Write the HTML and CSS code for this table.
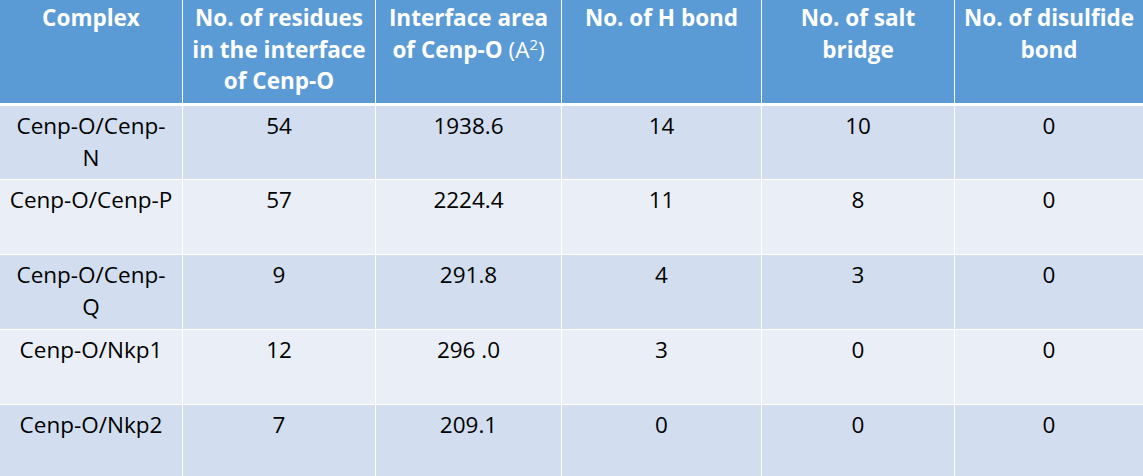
FILE: index.html
```html
<!DOCTYPE html>
<html lang="en">
<head>
<meta charset="utf-8">
<title>Cenp-O interface table</title>
<link rel="stylesheet" href="styles.css">
</head>
<body>
<div class="table">
  <div class="th">Complex</div>
  <div class="th">No. of residues<br>in the interface<br>of Cenp-O</div>
  <div class="th">Interface area<br>of Cenp-O <span class="unit">(A<sup>2</sup>)</span></div>
  <div class="th">No. of H bond</div>
  <div class="th">No. of salt<br>bridge</div>
  <div class="th">No. of disulfide<br>bond</div>

  <div class="td odd">Cenp-O/Cenp-<br>N</div>
  <div class="td odd">54</div>
  <div class="td odd">1938.6</div>
  <div class="td odd">14</div>
  <div class="td odd">10</div>
  <div class="td odd">0</div>

  <div class="td even">Cenp-O/Cenp-P</div>
  <div class="td even">57</div>
  <div class="td even">2224.4</div>
  <div class="td even">11</div>
  <div class="td even">8</div>
  <div class="td even">0</div>

  <div class="td odd">Cenp-O/Cenp-<br>Q</div>
  <div class="td odd">9</div>
  <div class="td odd">291.8</div>
  <div class="td odd">4</div>
  <div class="td odd">3</div>
  <div class="td odd">0</div>

  <div class="td even">Cenp-O/Nkp1</div>
  <div class="td even">12</div>
  <div class="td even">296 .0</div>
  <div class="td even">3</div>
  <div class="td even">0</div>
  <div class="td even">0</div>

  <div class="td odd">Cenp-O/Nkp2</div>
  <div class="td odd">7</div>
  <div class="td odd">209.1</div>
  <div class="td odd">0</div>
  <div class="td odd">0</div>
  <div class="td odd">0</div>
</div>
</body>
</html>
```
FILE: styles.css
```css
html, body {
  margin: 0;
  padding: 0;
  background: #ffffff;
}

body {
  font-family: "Open Sans", "Noto Sans", sans-serif;
  font-size: 22.5px;
  line-height: 31.7px;
  color: #000000;
}

.table {
  display: grid;
  grid-template-columns: 182px 192px 185px 199px 192px 188px;
  grid-template-rows: 105px 73px 74px 74px 74px 74px;
  column-gap: 1px;
  row-gap: 1px;
  width: 1143px;
  background: #ffffff;
}

.th {
  box-sizing: border-box;
  background: #5b9bd5;
  color: #ffffff;
  font-weight: 700;
  text-align: center;
  white-space: nowrap;
  padding: 2px 2px 0;
  border-bottom: 2px solid #ffffff;
}

.th .unit {
  font-weight: 400;
}

.th sup {
  font-size: 0.66em;
  line-height: 0;
  vertical-align: 0.55em;
}

.td {
  box-sizing: border-box;
  text-align: center;
  white-space: nowrap;
  padding: 4px 2px 0;
}

.odd {
  background: #d2deef;
}

.even {
  background: #eaeff7;
}
```
